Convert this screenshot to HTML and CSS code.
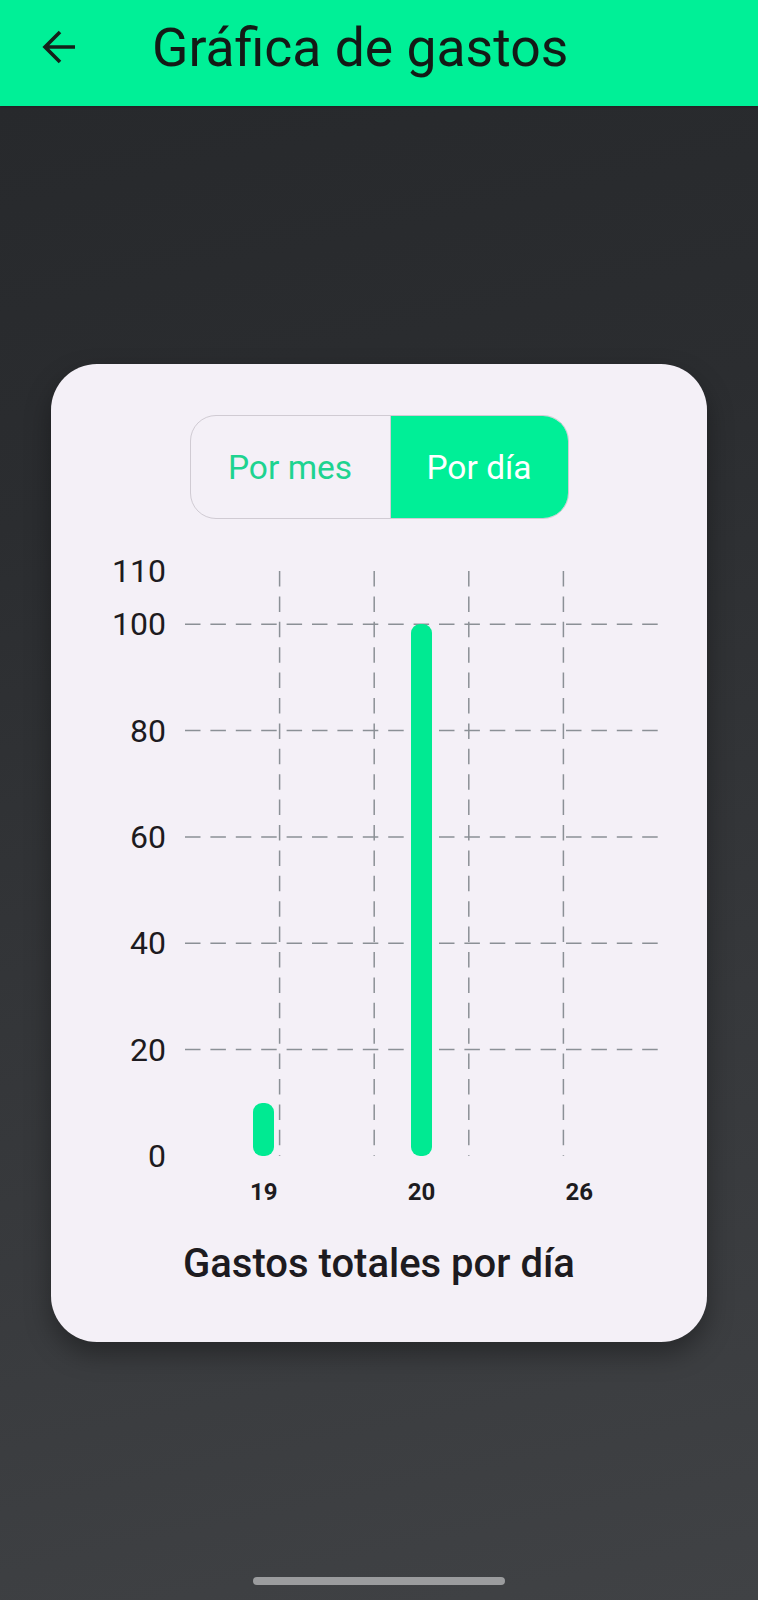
FILE: index.html
```html
<!DOCTYPE html>
<html lang="es">
<head>
<meta charset="utf-8">
<title>Gráfica de gastos</title>
<link rel="stylesheet" href="styles.css">
</head>
<body>
<header class="appbar">
  <svg class="back" viewBox="0 0 48 48" width="48" height="48" aria-hidden="true">
    <path d="M43 24H13M28 9L13 24l15 15" fill="none" stroke="#15201a" stroke-width="3.6" stroke-linecap="butt" stroke-linejoin="miter"/>
  </svg>
  <h1 class="title">Gráfica de gastos</h1>
</header>

<main class="content">
  <section class="card">
    <div class="toggle-wrap">
      <div class="toggle">
        <span class="seg seg-left">Por mes</span>
        <span class="seg seg-right active">Por día</span>
      </div>
    </div>

    <div class="chart">
      <div class="axis">
        <span class="ylabel" style="top:0px">110</span>
        <span class="ylabel" style="top:53.2px">100</span>
        <span class="ylabel" style="top:159.5px">80</span>
        <span class="ylabel" style="top:265.9px">60</span>
        <span class="ylabel" style="top:372.3px">40</span>
        <span class="ylabel" style="top:478.6px">20</span>
        <span class="ylabel" style="top:585px">0</span>
      </div>
      <div class="plot">
        <svg class="grid" viewBox="0 0 473 585" width="473" height="585" aria-hidden="true">
          <g stroke="#8b9096" stroke-width="1.5" stroke-dasharray="15.5 9.9" fill="none">
            <line x1="0" y1="53.2" x2="473" y2="53.2"/>
            <line x1="0" y1="159.5" x2="473" y2="159.5"/>
            <line x1="0" y1="265.9" x2="473" y2="265.9"/>
            <line x1="0" y1="372.3" x2="473" y2="372.3"/>
            <line x1="0" y1="478.6" x2="473" y2="478.6"/>
            <line x1="94.6" y1="0" x2="94.6" y2="585"/>
            <line x1="189.2" y1="0" x2="189.2" y2="585"/>
            <line x1="283.8" y1="0" x2="283.8" y2="585"/>
            <line x1="378.4" y1="0" x2="378.4" y2="585"/>
          </g>
        </svg>
        <div class="bars">
          <div class="group"><div class="bar" style="height:53.2px"></div></div>
          <div class="group"><div class="bar" style="height:531.8px"></div></div>
          <div class="group"></div>
        </div>
      </div>
      <div class="xlabels">
        <span>19</span>
        <span>20</span>
        <span>26</span>
      </div>
    </div>

    <h2 class="chart-title">Gastos totales por día</h2>
  </section>
</main>

<div class="home-indicator"></div>
</body>
</html>
```

FILE: styles.css
```css
* { box-sizing: border-box; }

html, body {
  margin: 0;
  padding: 0;
}

body {
  width: 758px;
  height: 1600px;
  overflow: hidden;
  font-family: Roboto, "Noto Sans", "Liberation Sans", sans-serif;
  color: #1d1b20;
  background: linear-gradient(168deg, #26282b 0%, #2b2d30 30%, #36383b 65%, #404245 100%);
  display: flex;
  flex-direction: column;
}

.appbar {
  height: 106px;
  background: #00f097;
  display: flex;
  align-items: center;
  padding: 0 0 12px 32px;
  box-shadow: 0 1px 3px rgba(0, 0, 0, 0.25);
}

.back {
  display: block;
  flex: none;
}

.title {
  margin: 0 0 0 72px;
  font-size: 53.5px;
  font-weight: 400;
  color: #131a16;
  line-height: normal;
}

.content {
  display: flex;
  justify-content: center;
  padding-top: 258px;
}

.card {
  width: 656px;
  background: #f4f0f7;
  border-radius: 46px;
  padding: 51px 0 55px;
  box-shadow: 0 12px 26px rgba(0, 0, 0, 0.34);
}

.toggle-wrap {
  display: flex;
  justify-content: center;
}

.toggle {
  display: flex;
  height: 104px;
  border: 1.5px solid #d0cbd3;
  border-radius: 26px;
  overflow: hidden;
}

.seg {
  display: flex;
  align-items: center;
  justify-content: center;
  font-size: 33.5px;
  color: #1ed390;
}

.seg-left {
  width: 200px;
  border-right: 1px solid #d0cbd3;
}

.seg-right {
  width: 177px;
}

.seg.active {
  background: #00ef97;
  color: #ffffff;
}

.chart {
  margin-top: 52px;
  padding-left: 55px;
  display: grid;
  grid-template-columns: 60px 473px;
  column-gap: 19px;
  row-gap: 22px;
}

.axis {
  position: relative;
  height: 585px;
}

.ylabel {
  position: absolute;
  right: 0;
  transform: translateY(-50%);
  font-size: 32px;
  line-height: 1;
  color: #1d1b20;
}

.plot {
  position: relative;
  width: 473px;
  height: 585px;
}

.grid {
  position: absolute;
  left: 0;
  top: 0;
  display: block;
}

.bars {
  position: relative;
  height: 100%;
  display: flex;
}

.group {
  flex: 1;
  display: flex;
  justify-content: center;
  align-items: flex-end;
}

.bar {
  width: 21px;
  background: #00ea92;
  border-radius: 9px;
}

.xlabels {
  grid-column: 2;
  display: flex;
}

.xlabels span {
  flex: 1;
  text-align: center;
  font-size: 24px;
  font-weight: 700;
  line-height: 28px;
  color: #1d1b20;
}

.chart-title {
  margin: 34px 0 0;
  text-align: center;
  font-size: 40px;
  font-weight: 500;
  line-height: 47px;
  color: #1d1b20;
}

.home-indicator {
  width: 252px;
  height: 8px;
  border-radius: 4px;
  background: #9b9c9e;
  margin: 235px auto 0;
}
```
